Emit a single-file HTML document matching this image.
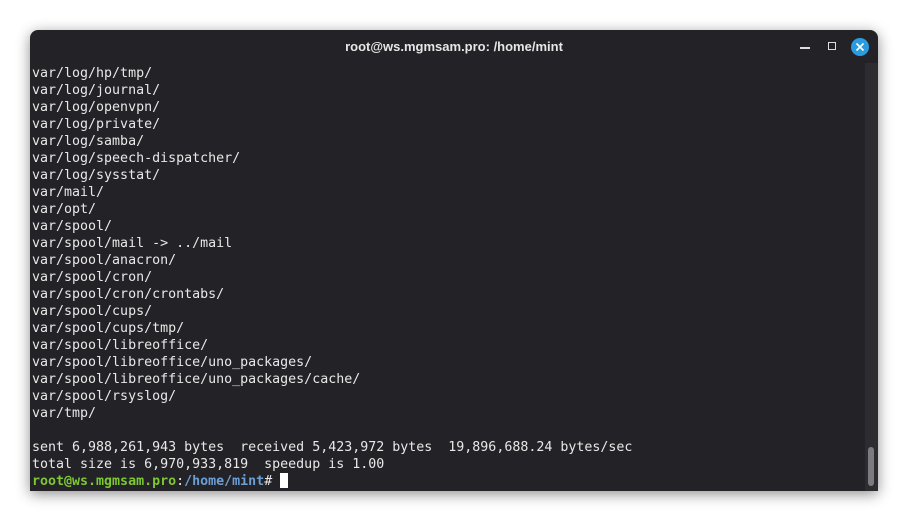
<!DOCTYPE html>
<html><head><style>
body{margin:0;width:908px;height:521px;background:#fff;overflow:hidden;position:relative}
.win{position:absolute;left:30px;top:30px;width:848px;height:461px;background:#232327;border-radius:8px 8px 0 0;box-shadow:0 3px 14px rgba(0,0,0,.45);overflow:hidden}
.title{position:absolute;left:0;right:0;top:9px;text-align:center;color:#e6e6e6;font:bold 13px "Liberation Sans","DejaVu Sans",sans-serif}
.term{position:absolute;left:2px;top:35px;margin:0;color:#e8e8e8;font:13.3px/17px "DejaVu Sans Mono","Liberation Mono",monospace;white-space:pre}
.sb{position:absolute;left:835px;top:33px;width:13px;height:428px;background:#2c2c31}
.th{position:absolute;left:3px;top:384px;width:6px;height:39px;border-radius:3px;background:#7c7c80}
.g{color:#7dc733;font-weight:bold}.b{color:#6b9ed6;font-weight:bold}
.cur{display:inline-block;width:8px;height:15px;background:#fff;vertical-align:-3px}
</style></head><body>
<div class="win">
<div class="title">root@ws.mgmsam.pro: /home/mint</div>
<div style="position:absolute;left:770px;top:17px;width:10px;height:1.5px;background:#ddd"></div>
<div style="position:absolute;left:798px;top:12px;width:6px;height:6px;border:1.5px solid #ddd"></div>
<div style="position:absolute;left:821px;top:8px;width:18px;height:18px;border-radius:50%;background:#2b9be0">
<svg width="18" height="18" viewBox="0 0 18 18"><path d="M5.5 5.5L12.5 12.5M12.5 5.5L5.5 12.5" stroke="#fff" stroke-width="1.6"/></svg></div>
<pre class="term">var/log/hp/tmp/
var/log/journal/
var/log/openvpn/
var/log/private/
var/log/samba/
var/log/speech-dispatcher/
var/log/sysstat/
var/mail/
var/opt/
var/spool/
var/spool/mail -&gt; ../mail
var/spool/anacron/
var/spool/cron/
var/spool/cron/crontabs/
var/spool/cups/
var/spool/cups/tmp/
var/spool/libreoffice/
var/spool/libreoffice/uno_packages/
var/spool/libreoffice/uno_packages/cache/
var/spool/rsyslog/
var/tmp/

sent 6,988,261,943 bytes  received 5,423,972 bytes  19,896,688.24 bytes/sec
total size is 6,970,933,819  speedup is 1.00
<span class="g">root@ws.mgmsam.pro</span>:<span class="b">/home/mint</span># <span class="cur"></span></pre>
<div class="sb"><div class="th"></div></div>
</div>
</body></html>
